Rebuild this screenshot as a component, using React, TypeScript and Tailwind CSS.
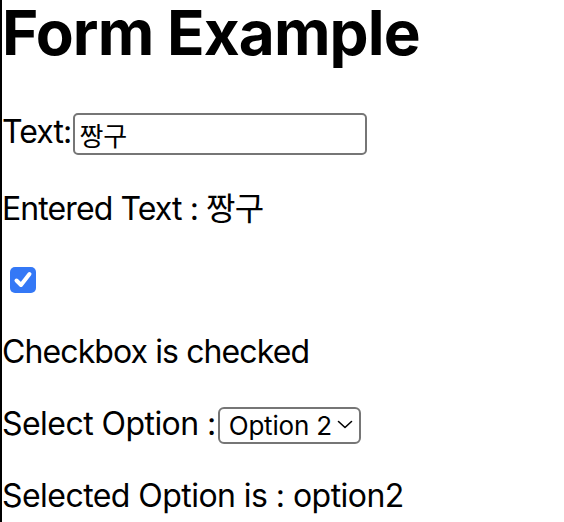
import React, { useState } from 'react';

export default function App() {
  const [text, setText] = useState('짱구');
  const [checked, setChecked] = useState(true);
  const [option, setOption] = useState('option2');

  return (
    <div className="min-h-[522px] border-l-2 border-black bg-white text-black font-['Inter','Noto_Sans_CJK_KR',sans-serif] text-[32px] leading-[37px] tracking-[-0.9px]">
      <h1 className="text-[62px] font-bold leading-[66px] tracking-[-0.9px]">Form Example</h1>

      {/* text input */}
      <div className="mt-[47px] flex items-start">
        <span>Text:</span>
        <input
          type="text"
          value={text}
          onChange={(e) => setText(e.target.value)}
          className="ml-[2px] h-[42px] w-[294px] rounded-[5px] border-2 border-[#767676] px-[4px] text-[26px] leading-[38px] tracking-normal outline-none"
        />
      </div>
      <p className="mt-[35px]">Entered Text : {text}</p>

      {/* checkbox */}
      <label className="relative ml-[8px] mt-[40px] flex h-[26px] w-[26px] cursor-pointer">
        <input
          type="checkbox"
          checked={checked}
          onChange={(e) => setChecked(e.target.checked)}
          className="h-[26px] w-[26px] appearance-none rounded-[5px] border-2 border-[#767676] checked:border-0 checked:bg-[#3478f6]"
        />
        {checked && (
          <svg viewBox="0 0 26 26" className="pointer-events-none absolute left-0 top-0 h-[26px] w-[26px]">
            <path d="M6.5 13.5 L11 18 L19.5 7" fill="none" stroke="white" strokeWidth="4" strokeLinecap="round" strokeLinejoin="round" />
          </svg>
        )}
      </label>
      <p className="mt-[40px]">{checked ? 'Checkbox is checked' : 'Checkbox is not checked'}</p>

      {/* select */}
      <div className="mt-[35px] flex items-start tracking-[-0.55px]">
        <span>Select Option :</span>
        <div className="relative ml-[2px]">
          <select
            value={option}
            onChange={(e) => setOption(e.target.value)}
            className="h-[37px] w-[143px] appearance-none rounded-[6px] border-2 border-[#767676] bg-white pl-[9px] text-[26px] leading-[33px] tracking-[-0.2px] outline-none"
          >
            <option value="option1">Option 1</option>
            <option value="option2">Option 2</option>
            <option value="option3">Option 3</option>
          </select>
          <svg viewBox="0 0 16 9" className="pointer-events-none absolute left-[119px] top-[15px] h-[9px] w-[16px]">
            <path d="M1.5 1.5 L8 7.5 L14.5 1.5" fill="none" stroke="black" strokeWidth="1.6" strokeLinecap="round" strokeLinejoin="round" />
          </svg>
        </div>
      </div>
      <p className="mt-[33px] tracking-[-0.55px]">Selected Option is : {option}</p>
    </div>
  );
}
